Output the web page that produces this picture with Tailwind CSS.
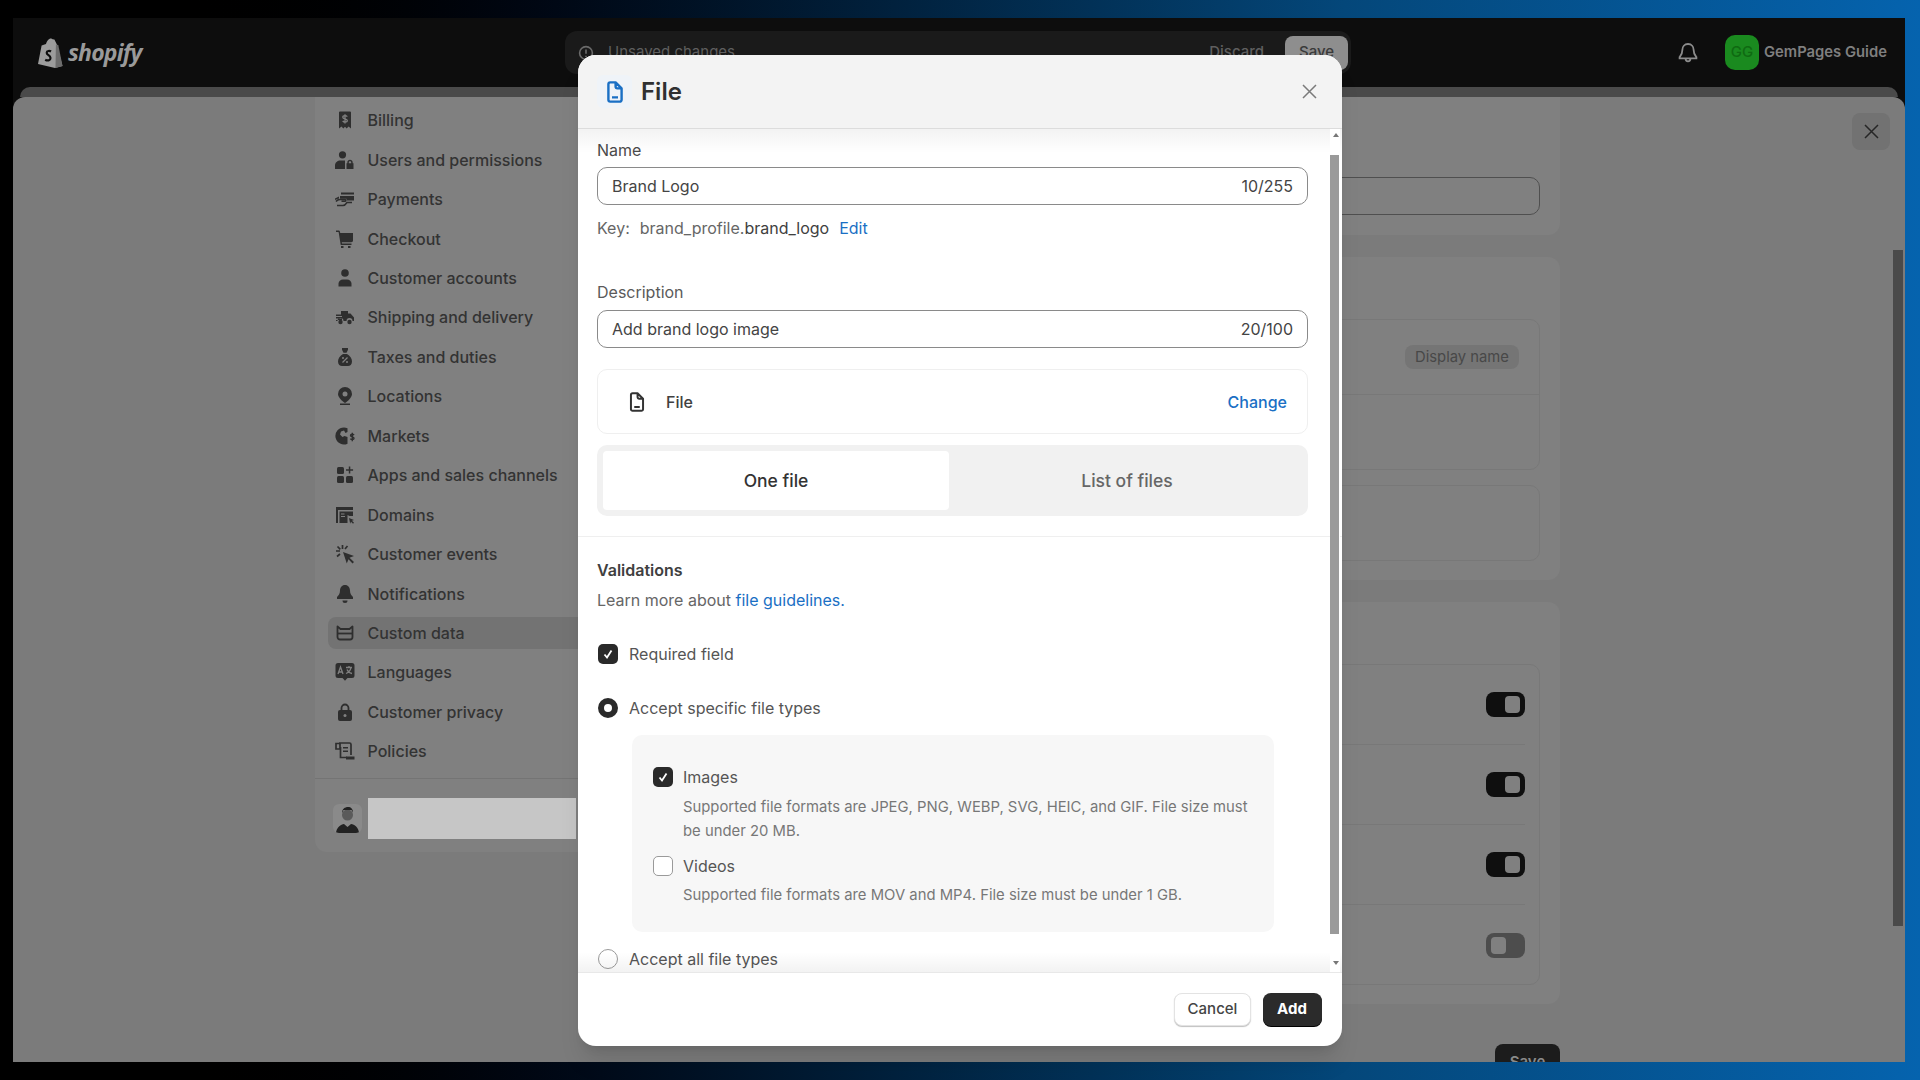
<!DOCTYPE html>
<html lang="en">
<head>
    <meta charset="UTF-8">
    <title>File - Custom data</title>
    <script src="https://cdn.jsdelivr.net/npm/@tailwindcss/browser@4"></script>
</head>
<body class="relative h-screen w-screen overflow-hidden bg-gradient-to-r from-black from-[8%] via-[#04477a] via-[70%] to-[#0563ae] font-['Inter',sans-serif]">

    <!-- admin page behind the dialog -->
    <div class="ml-[13px] mt-[18px] flex h-[1044px] w-[1892px] flex-col overflow-hidden bg-[#0d0d0d]">
        <header class="flex h-[69px] shrink-0 items-center pl-[24px]">
            <svg class="h-[30px] w-[26px] shrink-0" viewBox="0 0 26 30">
                <path fill="#9c9c9c" d="M1 26 4.6 7.6 9 6c.8-3 2.6-5.6 5-5.6.7 0 1.200.3 1.600.8l1.800.2L20 6.800 25.500 28 18 30z"/>
                <path fill="#6d6d6d" d="M18.500 30 25.500 28 21.300 6.900l-2.400-.3z"/>
                <path fill="none" stroke="#0d0d0d" stroke-width="2.200" d="M14 13.500c-1.200-.8-4.200-1-4.300 1.200-.1 2.300 3.800 2.600 3.800 5.200 0 2.700-3 3.200-5.300 1.800"/>
            </svg>
            <span class="ml-[5px] w-[80px] text-[23px] font-bold italic leading-none tracking-[-0.8px] text-[#9a9a9a] font-['Open_Sans',sans-serif]">shopify</span>

            <div class="ml-[417px] flex h-[43px] w-[786px] items-center rounded-xl bg-[#1a1a1a] pl-[13px] pr-[3px]">
                <svg class="h-4 w-4 shrink-0" viewBox="0 0 20 20" fill="none" stroke="#6b6b6b" stroke-width="2"><circle cx="10" cy="10" r="8"/><path d="M10 5.500v5.500M10 13.500v1.500"/></svg>
                <span class="ml-[14px] flex-1 text-[15px] text-[#5f5f5f]">Unsaved changes</span>
                <span class="mr-[21px] text-[15px] font-medium text-[#5f5f5f]">Discard</span>
                <span class="flex h-[34px] w-[63px] items-center justify-center rounded-lg bg-[#8e8e8e] text-[15px] font-medium text-[#3a3a3a]">Save</span>
            </div>

            <svg class="ml-[325px] h-6 w-6 shrink-0" viewBox="0 0 20 20" fill="none" stroke="#8c8c8c" stroke-width="1.500"><path d="M10 2.500c-3 0-4.700 2.200-4.700 5 0 3.500-1.300 4.800-2.300 6v1h14v-1c-1-1.200-2.300-2.500-2.300-6 0-2.800-1.700-5-4.700-5zM8 14.500c0 3.200 4 3.200 4 0"/></svg>
            <div class="ml-[25px] flex h-[35px] w-[34px] shrink-0 items-center justify-center rounded-[10px] bg-[#1a8a1f] text-[15px] font-medium text-[#0f6a12]">GG</div>
            <span class="ml-[5px] text-[14.800px] font-semibold whitespace-nowrap text-[#7f7f7f]">GemPages Guide</span>
        </header>

        <div class="mx-[7px] h-[10px] shrink-0 rounded-t-xl bg-[#4a4a4a]"></div>

        <div class="relative flex min-h-0 flex-1 items-start overflow-hidden rounded-t-[12px] bg-[#7b7b7b]">
            <!-- settings nav -->
            <aside class="ml-[302px] w-[290px] shrink-0 rounded-b-xl bg-[#808080] pb-[13px]">
                <nav class="flex flex-col gap-[7.450px] pb-[11px] pl-[13px] pt-[7.300px] text-[16px] font-medium text-[#333333]">
                    <a class="flex h-8 items-center gap-[12.500px] pl-[7px]">
                        <svg class="h-5 w-5 shrink-0" viewBox="0 0 20 20"><path fill="#2e2e2e" d="M5 1.500h10a1 1 0 0 1 1 1v16l-2.500-2-1.800 2L10 16.700 8.300 18.500l-1.800-2-2.500 2v-16a1 1 0 0 1 1-1z"/><path fill="none" stroke="#808080" stroke-width="1.300" d="M12.300 6.600c-.5-.6-1.300-1-2.300-1-1.300 0-2.200.7-2.200 1.600 0 2.200 4.500 1.200 4.500 3.300 0 1-.9 1.600-2.300 1.600-1 0-1.800-.4-2.300-1.100M10 4.300v9.200"/></svg>
                        Billing
                    </a>
                    <a class="flex h-8 items-center gap-[12.500px] pl-[7px]">
                        <svg class="h-5 w-5 shrink-0" viewBox="0 0 20 20" fill="#2e2e2e"><circle cx="7.500" cy="4.800" r="3.600"/><path d="M0 19v-3.500c0-3 2.500-5 5.500-5H10v8.500zM11.500 19v-5.800h.8v-.7c0-1.700 1.300-2.700 2.700-2.700s2.700 1 2.700 2.700v.7h.8V19zM13.800 13.200h2.400v-.7c0-.7-.5-1.200-1.200-1.200s-1.200.5-1.200 1.200z"/></svg>
                        Users and permissions
                    </a>
                    <a class="flex h-8 items-center gap-[12.500px] pl-[7px]">
                        <svg class="h-5 w-5 shrink-0" viewBox="0 0 20 20" fill="#2e2e2e"><path d="M6 3.500h13v2H6zM5 7h14v4.500h-7.500V9.800H5zM0 9.500l4-2v2.200H3l-3 1.400z"/><path fill="none" stroke="#2e2e2e" stroke-width="1.500" d="M1 12.500c1-1.500 2.500-2 4-2h5c1 0 1 1.800 0 1.800H6.500M2 16.500h6c2 0 3-1.500 4-3h5"/></svg>
                        Payments
                    </a>
                    <a class="flex h-8 items-center gap-[12.500px] pl-[7px]">
                        <svg class="h-5 w-5 shrink-0" viewBox="0 0 20 20" fill="#2e2e2e"><path d="M1 1.500h2.500c.8 0 1.300.5 1.500 1.200l.2 1.300H18v7.500c0 1-.7 1.700-1.700 1.700H6.800l.2 1.300h9.500v1.500H5.700L3.600 3H1z"/><rect x="6" y="17" width="2.500" height="2"/><rect x="13" y="17" width="2.500" height="2"/></svg>
                        Checkout
                    </a>
                    <a class="flex h-8 items-center gap-[12.500px] pl-[7px]">
                        <svg class="h-5 w-5 shrink-0" viewBox="0 0 20 20" fill="#2e2e2e"><circle cx="10" cy="5" r="3.800"/><path d="M3.500 18.500v-2.700c0-2.500 2-4.300 4.500-4.300h4c2.500 0 4.500 1.800 4.500 4.300v2.700z"/></svg>
                        Customer accounts
                    </a>
                    <a class="flex h-8 items-center gap-[12.500px] pl-[7px]">
                        <svg class="h-5 w-5 shrink-0" viewBox="0 0 20 20" fill="#2e2e2e"><path d="M6 4h7v2.500h2.500l3.500 4v3.500h-1.500a3 3 0 0 0-6 0h-3a3 3 0 0 0-6 0H1v-1h6v-1.500H1v-1.500h6V9H1V7.500h5z"/><circle cx="5.500" cy="15" r="2.200"/><circle cx="14.500" cy="15" r="2.200"/></svg>
                        Shipping and delivery
                    </a>
                    <a class="flex h-8 items-center gap-[12.500px] pl-[7px]">
                        <svg class="h-5 w-5 shrink-0" viewBox="0 0 20 20"><path fill="#2e2e2e" d="M7 1h6v1.800l-1.500 3h-3L7 2.800zM8 7h4c3 1.500 5 4.500 5 7.500 0 3-2 4.500-4 4.500H7c-2 0-4-1.500-4-4.500S5 8.500 8 7z"/><path fill="none" stroke="#808080" stroke-width="1.300" d="M12.500 10.500 7.500 15.500"/><circle cx="8" cy="11" r="1" fill="#808080"/><circle cx="12" cy="15" r="1" fill="#808080"/></svg>
                        Taxes and duties
                    </a>
                    <a class="flex h-8 items-center gap-[12.500px] pl-[7px]">
                        <svg class="h-5 w-5 shrink-0" viewBox="0 0 20 20"><path fill="#2e2e2e" d="M10 1a7 7 0 0 0-7 7c0 3.500 4 7 7 9 3-2 7-5.500 7-9a7 7 0 0 0-7-7z"/><circle cx="10" cy="8" r="2.500" fill="#808080"/><path fill="#2e2e2e" d="M5 17.500h10V19H5z"/></svg>
                        Locations
                    </a>
                    <a class="flex h-8 items-center gap-[12.500px] pl-[7px]">
                        <svg class="h-5 w-5 shrink-0" viewBox="0 0 20 20"><path fill="#2e2e2e" d="M9 1.500a8.500 8.500 0 1 0 3.500 16.200V11l-3-1-2 1-2.500-2.500 1-3 3-1 1.500 2.500L12.500 6V2.300A8.500 8.500 0 0 0 9 1.500z"/><path fill="none" stroke="#2e2e2e" stroke-width="1.400" d="M19 9.200c-.4-.7-1-1-1.800-1-1 0-1.700.5-1.700 1.300 0 1.700 3.500 1 3.500 2.700 0 .8-.8 1.300-1.800 1.300-.8 0-1.400-.3-1.800-.9M17.300 6.800v8.500"/></svg>
                        Markets
                    </a>
                    <a class="flex h-8 items-center gap-[12.500px] pl-[7px]">
                        <svg class="h-5 w-5 shrink-0" viewBox="0 0 20 20" fill="#2e2e2e"><rect x="2" y="2" width="7" height="7" rx="1.500"/><rect x="2" y="11" width="7" height="7" rx="1.500"/><rect x="11" y="11" width="7" height="7" rx="1.500"/><path d="M13.800 1.500h1.500v2.800h2.800v1.500h-2.800v2.800h-1.500V5.800H11V4.300h2.800z"/></svg>
                        Apps and sales channels
                    </a>
                    <a class="flex h-8 items-center gap-[12.500px] pl-[7px]">
                        <svg class="h-5 w-5 shrink-0" viewBox="0 0 20 20"><path fill="#2e2e2e" d="M1 2h17v3H3v13H1zM4.500 6.500H18V11h-3.500l-2-1v8h-8zM14 13l5 2-2 .8 2 2-1 1-2-2-.8 2z"/><path fill="#808080" d="M6 8.500h3.500v1H6zM6 11h4v1H6z"/></svg>
                        Domains
                    </a>
                    <a class="flex h-8 items-center gap-[12.500px] pl-[7px]">
                        <svg class="h-5 w-5 shrink-0" viewBox="0 0 20 20"><path fill="#2e2e2e" d="M8 8l11 4-4.500 1.800L19 18l-1.500 1.500-4-4.300L11.800 19.500z"/><path fill="none" stroke="#2e2e2e" stroke-width="1.700" d="M7.500 1v4M1 7h4M2.500 2.500l2.800 2.800M12.500 2l-2.500 3M2 12.500l3-2.500"/></svg>
                        Customer events
                    </a>
                    <a class="flex h-8 items-center gap-[12.500px] pl-[7px]">
                        <svg class="h-5 w-5 shrink-0" viewBox="0 0 20 20" fill="#2e2e2e"><path d="M10 1c-3.200 0-5 2.500-5 5.500 0 3.500-1.500 5-3 6.500v2h16v-2c-1.500-1.500-3-3-3-6.500C15 3.500 13.200 1 10 1z"/><path d="M7.500 16.500h5a2.500 2.500 0 0 1-5 0z"/></svg>
                        Notifications
                    </a>
                    <a class="-mr-[12px] flex h-8 items-center gap-[12.500px] rounded-lg bg-[#737373] pl-[7px]">
                        <svg class="h-5 w-5 shrink-0" viewBox="0 0 20 20" fill="none" stroke="#2e2e2e" stroke-width="1.800" stroke-linejoin="round"><path d="M2.500 3.500 5.500 6h9l3-2.500V14a2.500 2.500 0 0 1-2.500 2.500H5A2.500 2.500 0 0 1 2.500 14z"/><path d="M2.500 10.500h15"/></svg>
                        Custom data
                    </a>
                    <a class="flex h-8 items-center gap-[12.500px] pl-[7px]">
                        <svg class="h-5 w-5 shrink-0" viewBox="0 0 20 20"><path fill="#2e2e2e" d="M3 1h14a2.500 2.500 0 0 1 2.500 2.500v10A2.500 2.500 0 0 1 17 16h-4.500L10 18.800 7.500 16H3A2.500 2.500 0 0 1 .5 13.500v-10A2.500 2.500 0 0 1 3 1z"/><path fill="none" stroke="#808080" stroke-width="1.300" d="M3 12l2.500-7L8 12M3.800 10h3.400M11 5.500h6M14 4v1.500M16 5.500c-.5 3-2.500 5-5 6M12 7.500c.8 2 2.500 3.500 5 4"/></svg>
                        Languages
                    </a>
                    <a class="flex h-8 items-center gap-[12.500px] pl-[7px]">
                        <svg class="h-5 w-5 shrink-0" viewBox="0 0 20 20"><path fill="none" stroke="#2e2e2e" stroke-width="1.800" d="M6.500 9V6a3.500 3.500 0 0 1 7 0v3"/><rect x="3" y="8" width="14" height="11" rx="2" fill="#2e2e2e"/><circle cx="10" cy="13.500" r="1.500" fill="#808080"/></svg>
                        Customer privacy
                    </a>
                    <a class="flex h-8 items-center gap-[12.500px] pl-[7px]">
                        <svg class="h-5 w-5 shrink-0" viewBox="0 0 20 20"><path fill="none" stroke="#2e2e2e" stroke-width="1.700" d="M4 2h10.500a1.500 1.500 0 0 1 1.500 1.500V14M1 2.500h4V8H1zM5.500 6v10.500H12"/><path fill="#2e2e2e" d="M11 15.500h8.500V18.500H11zM8 6h5v1.500H8zM8 9.500h5V11H8z"/></svg>
                        Policies
                    </a>
                </nav>
                <div class="h-px bg-[#747474]"></div>
                <div class="flex items-center pl-[18px] pt-[19px]">
                    <svg class="h-[29px] w-[29px] shrink-0 rounded-md bg-[#8a8a8a]" viewBox="0 0 29 29">
                        <circle cx="14.500" cy="11" r="5.500" fill="#5a5a5a"/>
                        <path fill="#222222" d="M9 9c0-4 3-6 6-6s5 2 5 5.500l-1.500-2.500h-8zM3 29c.5-6 5-8.500 8-9l3.500 3 3.500-3c3.500.5 7.500 3 8 9z"/>
                    </svg>
                    <div class="ml-[6px] h-[41px] w-[207.500px] bg-[#c6c6c6]"></div>
                </div>
            </aside>

            <!-- settings content -->
            <main class="ml-[-6px] flex w-[961px] shrink-0 flex-col gap-[22px]">
                <section class="h-[138px] rounded-b-xl bg-[#808080] pl-[20px] pr-[20px] pt-[80px]">
                    <div class="h-[38px] rounded-[10px] border border-[#4f4f4f]"></div>
                </section>
                <section class="flex h-[323px] flex-col gap-[15px] rounded-xl bg-[#808080] px-[20px] pt-[62px]">
                    <div class="h-[151px] rounded-[10px] border border-[#787878]">
                        <div class="flex h-[75px] items-center justify-end border-b border-[#787878] pr-[20px]">
                            <span class="flex h-[24px] w-[114px] items-center justify-center rounded-lg bg-[#757575] text-[14.800px] text-[#484848]">Display name</span>
                        </div>
                    </div>
                    <div class="h-[76px] rounded-[10px] border border-[#787878]"></div>
                </section>
                <section class="h-[402px] rounded-xl bg-[#808080] px-[20px] pt-[62px]">
                    <div class="h-[321px] rounded-[10px] border border-[#787878] pr-[14px]">
                        <div class="flex h-[80px] items-center justify-end border-b border-[#787878]">
                            <span class="flex h-[25px] w-[39px] items-center justify-end rounded-lg bg-[#0f0f0f] pr-[5px]"><span class="h-[17px] w-[15px] rounded-[4px] bg-[#808080]"></span></span>
                        </div>
                        <div class="flex h-[80px] items-center justify-end border-b border-[#787878]">
                            <span class="flex h-[25px] w-[39px] items-center justify-end rounded-lg bg-[#0f0f0f] pr-[5px]"><span class="h-[17px] w-[15px] rounded-[4px] bg-[#808080]"></span></span>
                        </div>
                        <div class="flex h-[80px] items-center justify-end border-b border-[#787878]">
                            <span class="flex h-[25px] w-[39px] items-center justify-end rounded-lg bg-[#0f0f0f] pr-[5px]"><span class="h-[17px] w-[15px] rounded-[4px] bg-[#808080]"></span></span>
                        </div>
                        <div class="flex h-[80px] items-center justify-end">
                            <span class="flex h-[25px] w-[39px] items-center rounded-lg bg-[#4d4d4d] pl-[5px]"><span class="h-[17px] w-[15px] rounded-[4px] bg-[#808080]"></span></span>
                        </div>
                    </div>
                </section>
                <div class="mt-[18px] flex justify-end">
                    <span class="flex h-[36px] w-[65px] items-center justify-center rounded-lg bg-[#1c1c1c] text-[15px] font-semibold text-[#8a8a8a]">Save</span>
                </div>
            </main>

            <!-- page scrollbar -->
            <div class="absolute inset-y-0 right-[2px] w-[10px]">
                <div class="mt-[153px] h-[676px] bg-[#4a4a4a]"></div>
            </div>
            <div class="absolute right-[15px] top-[16px] flex h-[37px] w-[38px] items-center justify-center rounded-lg bg-[#727272]">
                <svg class="h-[15px] w-[15px]" viewBox="0 0 15 15" fill="none" stroke="#262626" stroke-width="1.500"><path d="M1 1l13 13M14 1 1 14"/></svg>
            </div>
        </div>
    </div>

    <!-- File dialog -->
    <div class="absolute left-[577.500px] top-[55px] flex h-[991px] w-[764px] flex-col overflow-hidden rounded-[18px] bg-white shadow-xl">
        <div class="flex h-[74px] shrink-0 items-center border-b border-[#dcdcdc] bg-[#f3f3f3] pl-[19.500px] pr-[24.500px]">
            <div class="flex h-[33px] w-[35px] items-center justify-center rounded-md bg-[#eff3f8]">
                <svg class="h-[24px] w-[24px]" viewBox="0 0 20 20" fill="none" stroke="#1a6fc4" stroke-width="2" stroke-linejoin="round"><path d="M4.500 3.500A1.500 1.500 0 0 1 6 2h4.500l5 5v9.500A1.500 1.500 0 0 1 14 18H6a1.500 1.500 0 0 1-1.500-1.500zM10.500 2v3.500A1.500 1.500 0 0 0 12 7h3.500M7.500 14.500h5"/></svg>
            </div>
            <span class="ml-[9px] flex-1 text-[24px] font-semibold text-[#303030]">File</span>
            <svg class="h-[15px] w-[15px]" viewBox="0 0 15 15" fill="none" stroke="#7a7a7a" stroke-width="1.500"><path d="M1 1l13 13M14 1 1 14"/></svg>
        </div>

        <div class="relative min-h-0 flex-1 overflow-hidden">
            <div class="px-[19.500px] pt-[11px] text-[16px] text-[#4a4a4a]">
                <div class="w-[711px]">
                    <div class="h-5 leading-5">Name</div>
                    <div class="mt-[7px] flex h-[38px] items-center justify-between rounded-[10px] border border-[#8a8a8a] px-[14px] text-[#444444]">
                        <span>Brand Logo</span><span>10/255</span>
                    </div>
                    <div class="mt-[13px] flex h-5 items-center leading-5">
                        <span class="text-[#666666]">Key:</span>
                        <span class="ml-[10px] text-[#666666]">brand_profile.<span class="text-[#404040]">brand_logo</span></span>
                        <span class="ml-[10px] text-[#1a6fc4]">Edit</span>
                    </div>
                    <div class="mt-[44px] h-5 leading-5 text-[#5a5a5a]">Description</div>
                    <div class="mt-[8px] flex h-[38px] items-center justify-between rounded-[10px] border border-[#8a8a8a] px-[14px] text-[#444444]">
                        <span>Add brand logo image</span><span>20/100</span>
                    </div>
                    <div class="mt-[21px] flex h-[65px] items-center rounded-[10px] border border-[#efefef] pl-[28px] pr-[20px]">
                        <svg class="h-[22px] w-[22px]" viewBox="0 0 20 20" fill="none" stroke="#333333" stroke-width="1.800" stroke-linejoin="round"><path d="M4.500 3.500A1.500 1.500 0 0 1 6 2h4.500l5 5v9.500A1.500 1.500 0 0 1 14 18H6a1.500 1.500 0 0 1-1.500-1.500zM10.500 2v3.500A1.500 1.500 0 0 0 12 7h3.500M7.500 14.500h5"/></svg>
                        <span class="ml-[18px] flex-1 font-medium text-[#404040]">File</span>
                        <span class="font-medium text-[#1a6fc4]">Change</span>
                    </div>
                    <div class="mt-[11px] flex h-[71px] rounded-[10px] bg-[#f1f1f1] p-[6px] text-[17.500px] font-medium">
                        <div class="flex w-[346px] items-center justify-center rounded-[4px] bg-white pt-px text-[#333333]">One file</div>
                        <div class="flex flex-1 items-center justify-center pl-[3px] pt-px text-[#666666]">List of files</div>
                    </div>
                </div>
            </div>

            <div class="mt-[20px] h-px bg-[#efefef]"></div>

            <div class="px-[19.500px] pt-[23px] text-[16px] leading-5 text-[#555555]">
                <div class="h-5 font-semibold text-[#404040]">Validations</div>
                <div class="mt-[9.500px] h-5 text-[#666666]">Learn more about <span class="text-[#1a6fc4]">file guidelines.</span></div>

                <div class="ml-px mt-[34px] flex h-5 items-center gap-[11px]">
                    <span class="flex h-5 w-5 items-center justify-center rounded-[5px] bg-[#2a2a2a]">
                        <svg class="h-[14px] w-[14px]" viewBox="0 0 14 14" fill="none" stroke="#ffffff" stroke-width="1.800"><path d="M3.500 7.500 6 10.500 10.500 3.500"/></svg>
                    </span>
                    Required field
                </div>
                <div class="ml-px mt-[34px] flex h-5 items-center gap-[11px]">
                    <span class="h-5 w-5 rounded-full border-[6px] border-[#2a2a2a] bg-white"></span>
                    Accept specific file types
                </div>

                <div class="ml-[35px] mt-[17.500px] w-[641.500px] rounded-[10px] bg-[#f7f7f7] pb-[24.350px] pl-[20.600px] pt-[31.500px]">
                    <div class="flex h-5 items-center gap-[10.400px]">
                        <span class="flex h-5 w-5 items-center justify-center rounded-[5px] bg-[#2a2a2a]">
                            <svg class="h-[14px] w-[14px]" viewBox="0 0 14 14" fill="none" stroke="#ffffff" stroke-width="1.800"><path d="M3.500 7.500 6 10.500 10.500 3.500"/></svg>
                        </span>
                        Images
                    </div>
                    <p class="ml-[30.400px] mt-[8.250px] w-[575px] text-[14.850px] leading-[24.500px] text-[#777777]">Supported file formats are JPEG, PNG, WEBP, SVG, HEIC, and GIF. File size must be under 20 MB.</p>
                    <div class="mt-[11.750px] flex h-5 items-center gap-[10.400px]">
                        <span class="h-5 w-5 rounded-[5px] border border-[#9a9a9a] bg-white"></span>
                        Videos
                    </div>
                    <p class="ml-[30.400px] mt-[7.750px] text-[14.850px] leading-[24.500px] text-[#777777]">Supported file formats are MOV and MP4. File size must be under 1 GB.</p>
                </div>

                <div class="ml-px mt-[17px] flex h-5 items-center gap-[11px]">
                    <span class="h-5 w-5 rounded-full border border-[#9a9a9a] bg-white"></span>
                    Accept all file types
                </div>
            </div>

            <!-- scroll shadows and scrollbar -->
            <div class="absolute inset-x-0 top-0 h-[24px] bg-gradient-to-b from-black/5 to-transparent"></div>
            <div class="absolute inset-x-0 bottom-0 h-[20px] bg-gradient-to-t from-black/5 to-transparent"></div>
            <div class="absolute inset-y-0 right-[2px] w-[10px] bg-white">
                <div class="mt-[4px] h-0 w-0 translate-x-[3px] border-x-[3px] border-b-[4px] border-x-transparent border-b-[#777777]"></div>
                <div class="ml-[0.500px] mt-[18px] h-[779px] w-[9px] bg-[#9a9a9a]"></div>
                <div class="mt-[27px] h-0 w-0 translate-x-[3px] border-x-[3px] border-t-[4px] border-x-transparent border-t-[#777777]"></div>
            </div>
        </div>

        <div class="flex h-[74px] shrink-0 items-center justify-end gap-[11.500px] border-t border-[#e8e8e8] pr-[20px] text-[15px]">
            <span class="flex h-[33.500px] w-[77px] items-center justify-center rounded-lg border border-[#e3e3e3] bg-white font-medium text-[#444444] shadow-[0_1px_1px_rgba(0,0,0,0.25)]">Cancel</span>
            <span class="flex h-[33.500px] w-[59px] items-center justify-center rounded-lg bg-[#2b2b2b] font-bold text-white shadow-[0_1px_0_#000000]">Add</span>
        </div>
    </div>
</body>
</html>
